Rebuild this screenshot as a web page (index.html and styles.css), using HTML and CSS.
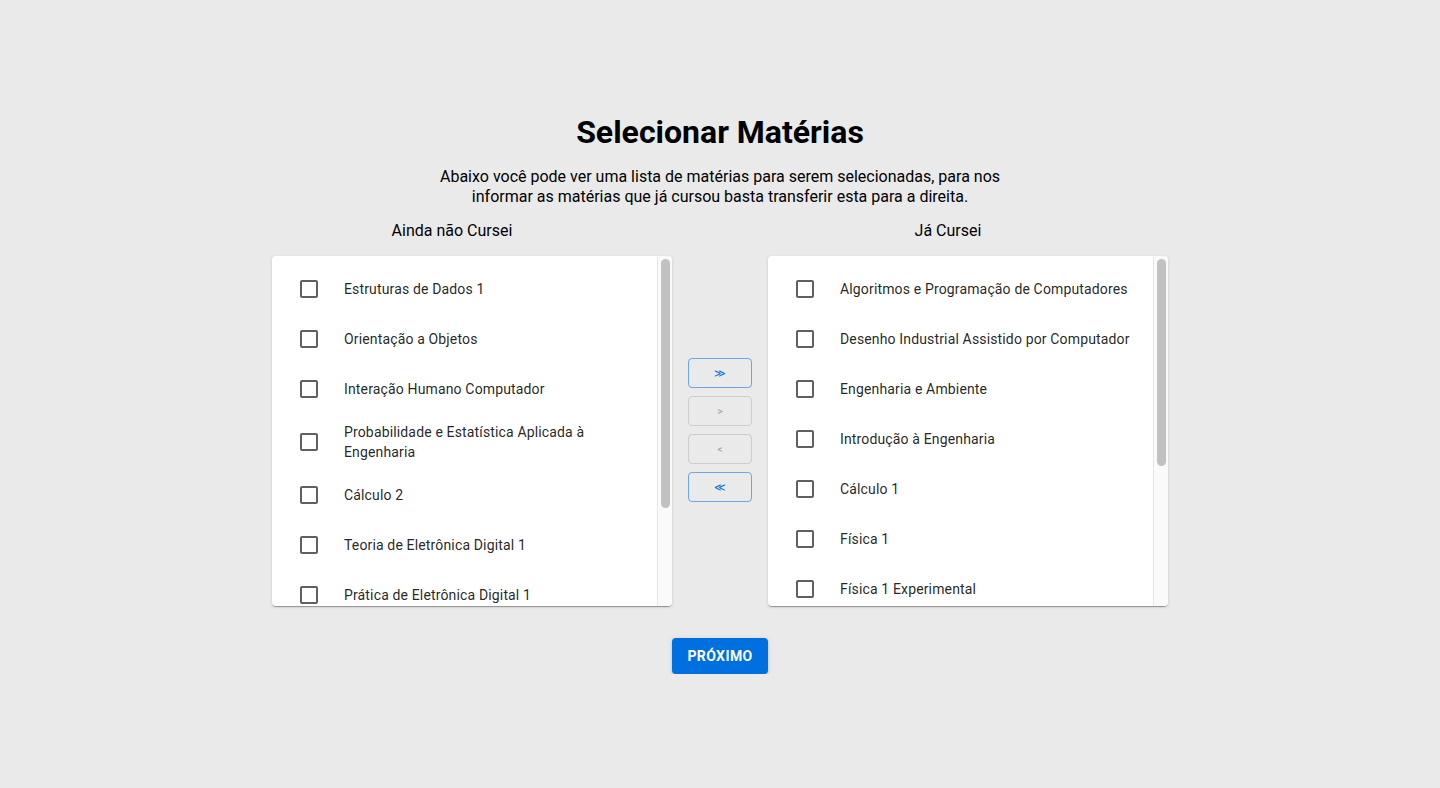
FILE: index.html
```html
<!DOCTYPE html>
<html lang="pt-BR">
<head>
<meta charset="utf-8">
<title>Selecionar Matérias</title>
<link rel="stylesheet" href="styles.css">
</head>
<body>
<main class="page">
  <h1 class="title">Selecionar Matérias</h1>
  <p class="desc">Abaixo você pode ver uma lista de matérias para serem selecionadas, para nos informar as matérias que já cursou basta transferir esta para a direita.</p>

  <div class="transfer">
    <div class="col-label">Ainda não Cursei</div>
    <div></div>
    <div class="col-label">Já Cursei</div>

    <div class="card">
      <ul class="list">
        <li class="item"><span class="check"></span><span class="text">Estruturas de Dados 1</span></li>
        <li class="item"><span class="check"></span><span class="text">Orientação a Objetos</span></li>
        <li class="item"><span class="check"></span><span class="text">Interação Humano Computador</span></li>
        <li class="item"><span class="check"></span><span class="text">Probabilidade e Estatística Aplicada à Engenharia</span></li>
        <li class="item"><span class="check"></span><span class="text">Cálculo 2</span></li>
        <li class="item"><span class="check"></span><span class="text">Teoria de Eletrônica Digital 1</span></li>
        <li class="item"><span class="check"></span><span class="text">Prática de Eletrônica Digital 1</span></li>
      </ul>
      <div class="scrollbar"><div class="thumb" style="height: 249px"></div></div>
    </div>

    <div class="actions">
      <button class="move">&#8811;</button>
      <button class="move" disabled>&gt;</button>
      <button class="move" disabled>&lt;</button>
      <button class="move">&#8810;</button>
    </div>

    <div class="card">
      <ul class="list">
        <li class="item"><span class="check"></span><span class="text">Algoritmos e Programação de Computadores</span></li>
        <li class="item"><span class="check"></span><span class="text">Desenho Industrial Assistido por Computador</span></li>
        <li class="item"><span class="check"></span><span class="text">Engenharia e Ambiente</span></li>
        <li class="item"><span class="check"></span><span class="text">Introdução à Engenharia</span></li>
        <li class="item"><span class="check"></span><span class="text">Cálculo 1</span></li>
        <li class="item"><span class="check"></span><span class="text">Física 1</span></li>
        <li class="item"><span class="check"></span><span class="text">Física 1 Experimental</span></li>
      </ul>
      <div class="scrollbar"><div class="thumb" style="height: 207px"></div></div>
    </div>
  </div>

  <button class="next">Próximo</button>
</main>
</body>
</html>
```
FILE: styles.css
```css
* { box-sizing: border-box; }

html, body {
  margin: 0;
  padding: 0;
  background: #eaeaea;
  font-family: Roboto, "Liberation Sans", Arial, sans-serif;
  color: rgba(0, 0, 0, 0.87);
}

.page {
  display: flex;
  flex-direction: column;
  align-items: center;
  padding-top: 113px;
}

.title {
  margin: 0;
  font-size: 32px;
  line-height: 38px;
  font-weight: 700;
  color: #000;
}

.desc {
  margin: 16px 0 0;
  width: 580px;
  text-align: center;
  font-size: 16px;
  line-height: 19.5px;
  color: #000;
}

.transfer {
  margin-top: 14px;
  display: grid;
  grid-template-columns: 400px 96px 400px;
  grid-template-rows: 20px 350px;
  row-gap: 16px;
}

.col-label {
  font-size: 16px;
  line-height: 20px;
  text-align: center;
  padding-right: 40px;
  padding-top: 1px;
  color: #000;
}

.card {
  display: flex;
  background: #fff;
  border-radius: 4px;
  box-shadow: 0 2px 1px -1px rgba(0,0,0,0.2), 0 1px 1px 0 rgba(0,0,0,0.14), 0 1px 3px 0 rgba(0,0,0,0.12);
  overflow: hidden;
}

.list {
  flex: 1;
  min-width: 0;
  list-style: none;
  margin: 0;
  padding: 8px 0;
  height: 350px;
  overflow: hidden;
}

.scrollbar {
  flex: none;
  width: 15px;
  height: 350px;
  background: #fafafa;
  border-left: 1px solid #e6e6e6;
  padding: 3px 2px 0 3px;
}

.thumb {
  width: 9px;
  background: #c1c1c1;
  border-radius: 5px;
}

.item {
  display: flex;
  align-items: center;
  min-height: 50px;
  padding: 8px 6px 8px 28px;
}

.check {
  flex: none;
  width: 18px;
  height: 18px;
  border: 2px solid #606060;
  border-radius: 2px;
  margin-right: 26px;
}

.text {
  font-size: 14px;
  line-height: 20px;
  letter-spacing: 0.15px;
  color: rgba(0, 0, 0, 0.87);
}

.actions {
  display: flex;
  flex-direction: column;
  align-items: center;
  justify-content: center;
  gap: 8px;
  padding-bottom: 2px;
}

.move {
  width: 64px;
  height: 30px;
  background: transparent;
  border: 1px solid rgba(0, 112, 224, 0.55);
  border-radius: 4px;
  color: #0070e0;
  font-family: Roboto, "Liberation Sans", Arial, sans-serif;
  font-size: 11px;
  font-weight: 500;
  line-height: 1;
  padding: 0;
}

.move:disabled {
  border-color: rgba(0, 0, 0, 0.12);
  color: rgba(0, 0, 0, 0.3);
}

.next {
  margin-top: 32px;
  width: 96px;
  height: 36px;
  background: #0070e0;
  color: #fff;
  border: none;
  border-radius: 4px;
  font-family: Roboto, "Liberation Sans", Arial, sans-serif;
  font-size: 14px;
  font-weight: 700;
  letter-spacing: 0.4px;
  text-transform: uppercase;
  box-shadow: 0 3px 1px -2px rgba(0,0,0,0.2), 0 2px 2px 0 rgba(0,0,0,0.14), 0 1px 5px 0 rgba(0,0,0,0.12);
}
```
